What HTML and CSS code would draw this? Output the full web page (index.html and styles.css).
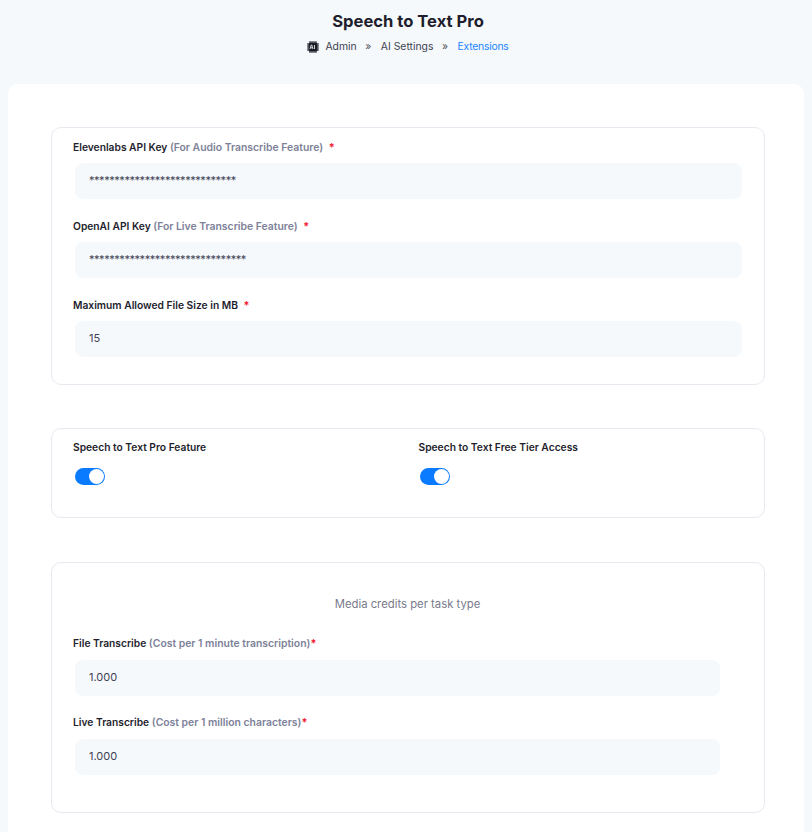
FILE: index.html
```html
<!DOCTYPE html>
<html lang="en">
<head>
    <meta charset="UTF-8">
    <meta name="viewport" content="width=device-width, initial-scale=1.0">
    <title>Speech to Text Pro</title>
    <link rel="stylesheet" href="styles.css">
</head>
<body>
    <div class="page-header">
        <h1>Speech to Text Pro</h1>
        <div class="breadcrumb">
            <svg class="chip-icon" width="12" height="12" viewBox="0 0 12 12">
                <path d="M3 0v12M5 0v12M7 0v12M9 0v12M0 3h12M0 5h12M0 7h12M0 9h12" stroke="#1c1c28" stroke-width="1"/>
                <rect x="1.5" y="1.5" width="9" height="9" rx="1.5" fill="#1c1c28"/>
                <path d="M3 8l1.2-4h.6L6 8M3.5 6.8h2M7.5 4v4" stroke="#fff" stroke-width=".8" fill="none"/>
            </svg>
            <span class="crumb">Admin</span>
            <span class="sep">»</span>
            <span class="crumb">AI Settings</span>
            <span class="sep">»</span>
            <span class="crumb active">Extensions</span>
        </div>
    </div>
    <div class="card">
        <div class="panel panel-keys">
            <div class="field">
                <label>Elevenlabs API Key <span class="hint">(For Audio Transcribe Feature)</span> <span class="req req-gap">*</span></label>
                <input class="secret" type="text" value="*****************************">
            </div>
            <div class="field">
                <label>OpenAI API Key <span class="hint">(For Live Transcribe Feature)</span> <span class="req req-gap">*</span></label>
                <input class="secret" type="text" value="*******************************">
            </div>
            <div class="field">
                <label>Maximum Allowed File Size in MB <span class="req req-gap">*</span></label>
                <input type="text" value="15">
            </div>
        </div>
        <div class="panel panel-toggles">
            <div class="toggle-col">
                <label>Speech to Text Pro Feature</label>
                <span class="toggle"></span>
            </div>
            <div class="toggle-col">
                <label>Speech to Text Free Tier Access</label>
                <span class="toggle"></span>
            </div>
        </div>
        <div class="panel panel-credits">
            <p class="panel-title">Media credits per task type</p>
            <div class="field">
                <label>File Transcribe <span class="hint">(Cost per 1 minute transcription)</span><span class="req">*</span></label>
                <input type="text" value="1.000">
            </div>
            <div class="field">
                <label>Live Transcribe <span class="hint">(Cost per 1 million characters)</span><span class="req">*</span></label>
                <input type="text" value="1.000">
            </div>
        </div>
    </div>
</body>
</html>
```

FILE: styles.css
```css
body {
    margin: 0;
    font-family: Inter, "Open Sans", sans-serif;
    background-color: #f5f9fc;
    color: #1c1c28;
}
.page-header {
    height: 84px;
    padding-left: 4px;
    text-align: center;
    overflow: hidden;
}
.page-header h1 {
    margin: 11px 0 0;
    font-size: 16.6px;
    line-height: 20px;
    font-weight: 700;
    color: #1e1e2d;
}
.breadcrumb {
    display: flex;
    justify-content: center;
    align-items: center;
    margin-top: 10px;
    font-size: 10.4px;
    line-height: 12px;
    color: #3f3f50;
}
.chip-icon {
    margin-right: 6px;
}
.sep {
    margin: 0 9.5px 0 8.5px;
    color: #555;
}
.crumb.active {
    color: #1d84ff;
    letter-spacing: -0.25px;
}
.card {
    margin: 0 8px;
    padding: 43px 39px 19px 43px;
    background: #fff;
    border-radius: 10px 10px 0 0;
}
.panel {
    border: 1px solid #e6e9f0;
    border-radius: 10px;
    padding: 0 22px 0 21px;
}
.panel-keys {
    height: 244px;
    padding-top: 12px;
}
.panel-toggles {
    display: flex;
    margin-top: 43px;
    height: 88px;
}
.panel-credits {
    margin-top: 44px;
    height: 249px;
    padding-right: 44px;
}
.panel-title {
    margin: 34px 0 25px;
    font-size: 11.3px;
    line-height: 14px;
    text-align: center;
    color: #7a7a8c;
    padding-left: 22px;
}
.field {
    margin-bottom: 20px;
}
label {
    display: block;
    height: 14px;
    font-size: 10.25px;
    line-height: 14px;
    font-weight: 600;
    color: #1e1e2d;
    margin-bottom: 9px;
}
.panel-credits .field {
    margin-bottom: 19px;
}
.panel-credits label {
    margin-bottom: 10px;
}
.hint {
    font-size: 10.4px;
    color: #7e8299;
}
.req {
    color: #f1152f;
    font-size: 11px;
    line-height: 0;
}
.req-gap {
    margin-left: 3px;
}
input {
    display: block;
    box-sizing: border-box;
    width: calc(100% - 2px);
    margin-left: 2px;
    height: 36px;
    padding: 0 14px 2px;
    border: none;
    border-radius: 8px;
    background: #f5f9fc;
    font-family: inherit;
    font-size: 11px;
    color: #3f4254;
}
.secret {
    letter-spacing: -0.45px;
}
.toggle-col {
    flex: 0 0 345.5px;
    padding-top: 11px;
}
.toggle-col:last-child {
    flex: 1;
}
.toggle-col label {
    margin-bottom: 14px;
}
.toggle {
    display: block;
    position: relative;
    width: 30px;
    height: 17px;
    margin-left: 2px;
    border-radius: 9px;
    background: #0a7bff;
}
.toggle-col:last-child .toggle {
    margin-left: 1px;
}
.toggle::after {
    content: '';
    position: absolute;
    top: 1px;
    right: 1px;
    width: 15px;
    height: 15px;
    border-radius: 50%;
    background: #fff;
}
```
